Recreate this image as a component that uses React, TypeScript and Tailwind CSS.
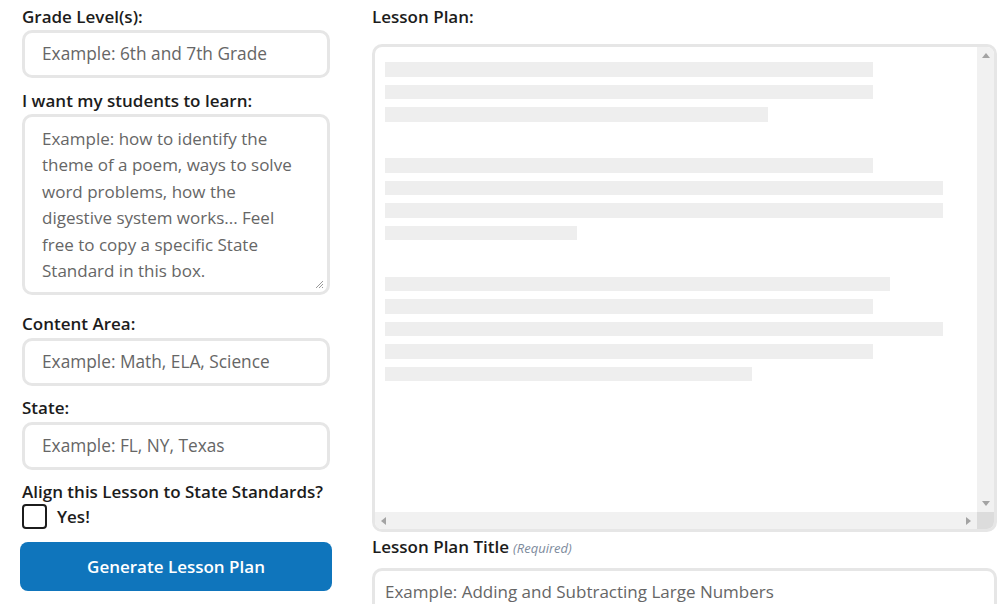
import React from "react";

const font = { fontFamily: '"Open Sans", "Noto Sans", Arial, sans-serif' };

function Label({ children }: { children: React.ReactNode }) {
  return (
    <div className="h-[24px] leading-[24px] text-[17px] font-semibold text-[#1c1c1c] whitespace-nowrap">{children}</div>
  );
}

function Input({ placeholder }: { placeholder: string }) {
  return (
    <div className="mx-[2px] h-[48px] shrink-0 rounded-[10px] border-[3px] border-[#e6e6e6] bg-white flex items-center pl-[17px] text-[17.3px] font-medium text-[#666666]">
      {placeholder}
    </div>
  );
}

const groups: number[][] = [
  [488, 488, 383],
  [488, 558, 558, 192],
  [505, 488, 558, 488, 367],
];

export default function App() {
  return (
    <div className="w-[1000px] h-[604px] overflow-hidden bg-white flex pl-[20px]" style={font}>
      <div className="w-[312px] flex flex-col shrink-0">
        <div className="mt-[5px] ml-[2px]"><Label>Grade Level(s):</Label></div>
        <div className="mt-[1px]"><Input placeholder="Example: 6th and 7th Grade" /></div>
        <div className="mt-[11px] ml-[2px]"><Label>I want my students to learn:</Label></div>
        <div className="mt-[1px] mx-[2px] h-[181px] shrink-0 rounded-[10px] border-[3px] border-[#e6e6e6] bg-white relative pl-[17px] pt-[9px] pr-[20px] text-[17px] font-medium leading-[26.4px] text-[#666666]">
          Example: how to identify the theme of a poem, ways to solve word problems, how the digestive system works... Feel free to copy a specific State Standard in this box.
          <svg className="absolute right-[3px] bottom-[3px]" width="9" height="9" viewBox="0 0 9 9">
            <path d="M8 1 L1 8 M8 4 L4 8 M8 7 L7 8" stroke="#9a9a9a" strokeWidth="1" />
          </svg>
        </div>
        <div className="mt-[17px] ml-[2px]"><Label>Content Area:</Label></div>
        <div className="mt-[2px]"><Input placeholder="Example: Math, ELA, Science" /></div>
        <div className="mt-[10px] ml-[2px]"><Label>State:</Label></div>
        <div className="mt-[2px]"><Input placeholder="Example: FL, NY, Texas" /></div>
        <div className="mt-[10px] ml-[2px]"><Label>Align this Lesson to State Standards?</Label></div>
        <div className="ml-[2px] flex items-center h-[25px] shrink-0">
          <div className="w-[25px] h-[25px] rounded-[4px] border-2 border-[#1c1c1c] bg-white" />
          <span className="ml-[10px] text-[17px] font-semibold text-[#1c1c1c]">Yes!</span>
        </div>
        <button className="mt-[13px] h-[49px] shrink-0 w-[312px] rounded-[8px] bg-[#0f75bc] text-white text-[17px] font-semibold">
          Generate Lesson Plan
        </button>
      </div>
      <div className="ml-[40px] w-[625px] flex flex-col shrink-0">
        <div className="mt-[5px]"><Label>Lesson Plan:</Label></div>
        <div className="mt-[15px] h-[488px] shrink-0 rounded-[10px] border-[3px] border-[#e6e6e6] bg-white flex flex-col overflow-hidden">
          <div className="flex flex-1 min-h-0">
            <div className="flex-1 pl-[10px] pt-[15px] flex flex-col gap-[36.5px]">
              {groups.map((g, gi) => (
                <div key={gi} className="flex flex-col gap-[8px]">
                  {g.map((w, i) => (
                    <div key={i} className="h-[14.5px] bg-[#eeeeee]" style={{ width: w }} />
                  ))}
                </div>
              ))}
            </div>
            <div className="w-[17px] bg-[#f1f1f1] flex flex-col justify-between items-center py-[6px]">
              <svg width="8" height="5" viewBox="0 0 8 5"><path d="M0 5 L4 0 L8 5 Z" fill="#a3a3a3" /></svg>
              <svg width="8" height="5" viewBox="0 0 8 5"><path d="M0 0 L4 5 L8 0 Z" fill="#a3a3a3" /></svg>
            </div>
          </div>
          <div className="h-[17px] flex shrink-0">
            <div className="flex-1 bg-[#f1f1f1] flex justify-between items-center px-[6px]">
              <svg width="5" height="8" viewBox="0 0 5 8"><path d="M5 0 L0 4 L5 8 Z" fill="#a3a3a3" /></svg>
              <svg width="5" height="8" viewBox="0 0 5 8"><path d="M0 0 L5 4 L0 8 Z" fill="#a3a3a3" /></svg>
            </div>
            <div className="w-[17px] bg-[#dcdcdc]" />
          </div>
        </div>
        <div className="mt-[3px] flex items-baseline h-[24px] leading-[24px] shrink-0">
          <span className="text-[17px] font-semibold text-[#1c1c1c]">Lesson Plan Title</span>
          <span className="ml-[4px] text-[13px] italic text-[#7d8a9c]">(Required)</span>
        </div>
        <div className="mt-[9px] h-[48px] shrink-0 rounded-[10px] border-[3px] border-[#e6e6e6] bg-white flex items-center pl-[10px] text-[17px] font-medium text-[#666666]">
          Example: Adding and Subtracting Large Numbers
        </div>
      </div>
    </div>
  );
}
